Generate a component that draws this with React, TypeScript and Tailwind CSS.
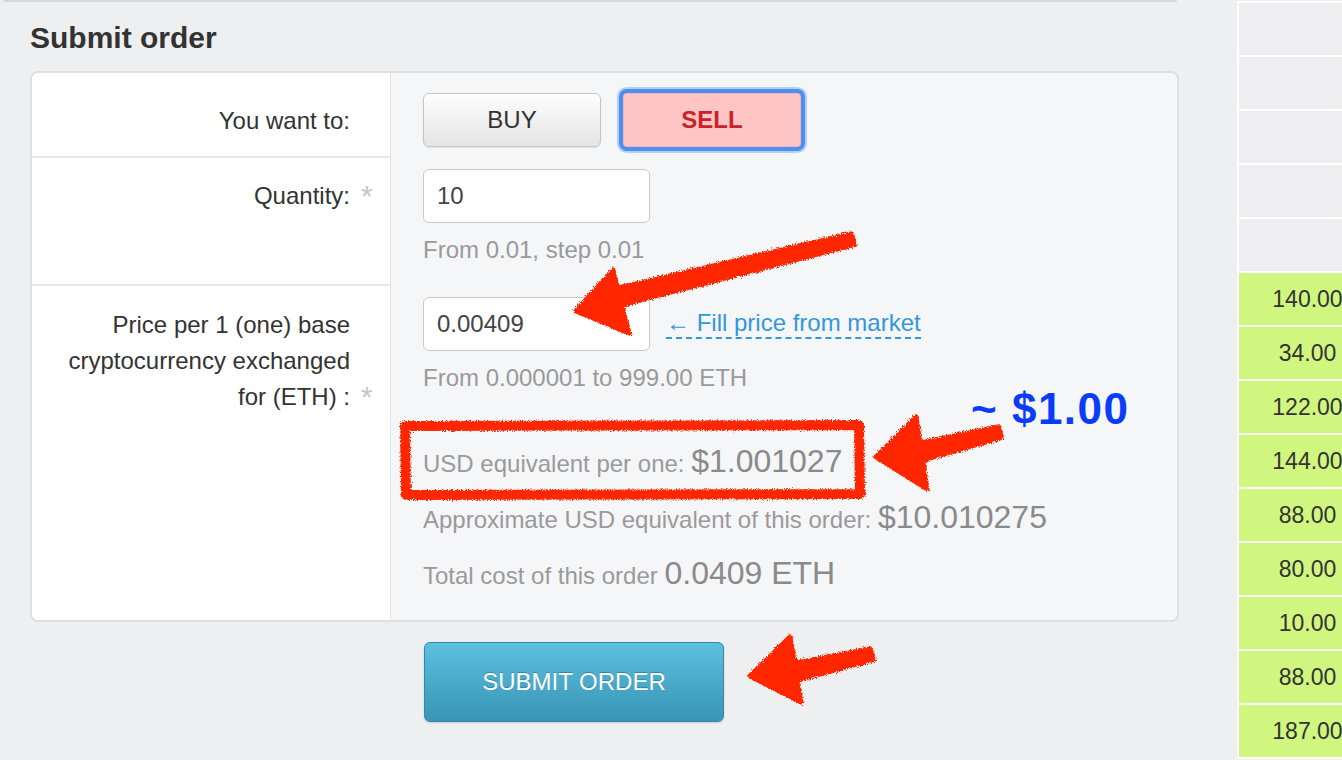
import type { ReactNode } from "react"

const depth = ["", "", "", "", "", "140.00", "34.00", "122.00", "144.00", "88.00", "80.00", "10.00", "88.00", "187.00"]

function Label({ children, required, top }: { children: ReactNode; required?: boolean; top: string }) {
  return (
    <div className={`flex items-end justify-end ${top}`}>
      <div className="text-right text-[24px] leading-[36px] text-[#333]">{children}</div>
      <span className="w-[40px] pb-[3px] pl-[11px] text-[30px] leading-none text-[#c6c6c6]">{required ? "*" : ""}</span>
    </div>
  )
}

function Annotations() {
  return (
    <svg className="pointer-events-none absolute inset-0" width="1342" height="760" viewBox="0 0 1342 760">
      <defs>
        <filter id="rough" x="-5%" y="-5%" width="110%" height="110%">
          <feTurbulence type="fractalNoise" baseFrequency="0.8" numOctaves="2" result="noise" />
          <feDisplacementMap in="SourceGraphic" in2="noise" scale="5" />
        </filter>
      </defs>
      <g fill="#ff2600" stroke="#ff2600" strokeLinejoin="round" filter="url(#rough)">
        {/* arrow to price input */}
        <polygon points="851.8,233.2 855.2,244.9 619.7,305.8 615.3,288.2" strokeWidth="4" />
        <polygon points="576,311 613,270 629,333" strokeWidth="5" />
        {/* arrow to usd box */}
        <polygon points="998.8,426.2 1002.2,437.8 921.7,460.8 917.3,443.2" strokeWidth="4" />
        <polygon points="876,457 916,417 927,489" strokeWidth="5" />
        {/* arrow to submit */}
        <polygon points="870.8,648.1 874.2,659.9 796.6,680.8 792.4,663.2" strokeWidth="4" />
        <polygon points="750,676 790,637 801,702" strokeWidth="5" />
        <path d="M405 426 L859 425 L860 494 L406 495 Z" fill="none" strokeWidth="10" />
      </g>
    </svg>
  )
}

export default function App() {
  return (
    <div className="relative h-[760px] w-[1342px] overflow-hidden bg-[#eeeff1] font-['Liberation_Sans',Arial,sans-serif] text-[#333]">
      <div className="flex items-start">
        <div className="w-[1237px] shrink-0">
          <div className="ml-[3px] h-[2px] w-[1174px] rounded-b-[3px] bg-[#d6d7da]" />
          <h2 className="ml-[30px] mt-[18px] text-[30px] font-bold leading-[36px] text-[#333]">Submit order</h2>

          <div className="ml-[30px] mt-[15px] w-[1149px] overflow-hidden rounded-[8px] border-2 border-[#dedfe2]">
            {/* row: direction */}
            <div className="flex">
              <div className="h-[85px] w-[358px] border-b-2 border-[#e6e7ea] bg-white">
                <Label top="pt-[30px]">You want to:</Label>
              </div>
              <div className="flex flex-1 gap-[22px] border-l border-[#e3e4e7] bg-[#f5f6f8] pl-[32px] pt-[20px]">
                <button className="h-[54px] w-[178px] rounded-[6px] border border-[#c4c4c4] bg-gradient-to-b from-[#fdfdfd] to-[#e5e5e5] text-[24px] text-[#333] shadow-[0_1px_1px_rgba(0,0,0,0.08)]">
                  BUY
                </button>
                <button className="h-[54px] w-[178px] rounded-[4px] border border-dotted border-[#eaa3a3] bg-[#ffc4c4] text-[24px] font-bold text-[#c8222a] shadow-[0_0_0_4px_#4b8ff0,0_0_0_6px_#b5d0f8]">
                  SELL
                </button>
              </div>
            </div>

            {/* row: quantity */}
            <div className="flex">
              <div className="h-[128px] w-[358px] border-b-2 border-[#e6e7ea] bg-white">
                <Label top="pt-[20px]" required>
                  Quantity:
                </Label>
              </div>
              <div className="flex-1 border-l border-[#e3e4e7] bg-[#f5f6f8] pl-[32px] pt-[11px]">
                <input
                  readOnly
                  value="10"
                  className="h-[54px] w-[227px] rounded-[6px] border border-[#c8c8c8] bg-white pl-[13px] text-[24px] text-[#444] outline-none"
                />
                <div className="mt-[9px] text-[24px] leading-[36px] text-[#9a9a9a]">From 0.01, step 0.01</div>
              </div>
            </div>

            {/* row: price */}
            <div className="flex">
              <div className="h-[334px] w-[358px] bg-white">
                <Label top="pt-[21px]" required>
                  Price per 1 (one) base
                  <br />
                  cryptocurrency exchanged
                  <br />
                  for (ETH) :
                </Label>
              </div>
              <div className="flex-1 border-l border-[#e3e4e7] bg-[#f5f6f8] pl-[32px] pt-[11px]">
                <div className="flex items-center gap-[16px]">
                  <input
                    readOnly
                    value="0.00409"
                    className="h-[54px] w-[227px] rounded-[6px] border border-[#c8c8c8] bg-white pl-[13px] text-[24px] text-[#444] outline-none"
                  />
                  <a className="border-b-2 border-dashed border-[#3497db] text-[24px] leading-[28px] text-[#3497db]">
                    ← Fill price from market
                  </a>
                </div>
                <div className="mt-[9px] text-[24px] leading-[36px] text-[#9a9a9a]">From 0.000001 to 999.00 ETH</div>
                <div className="mt-[40px] text-[24px] leading-[56px] text-[#9a9a9a]">
                  USD equivalent per one: <span className="text-[32px] leading-none text-[#8a8a8a]">$1.001027</span>
                </div>
                <div className="text-[24px] leading-[56px] text-[#9a9a9a]">
                  Approximate USD equivalent of this order:{" "}
                  <span className="text-[32px] leading-none text-[#8a8a8a]">$10.010275</span>
                </div>
                <div className="text-[24px] leading-[56px] text-[#9a9a9a]">
                  Total cost of this order <span className="text-[32px] leading-none text-[#8a8a8a]">0.0409 ETH</span>
                </div>
              </div>
            </div>
          </div>

          <button className="ml-[424px] mt-[20px] h-[80px] w-[300px] rounded-[6px] border border-[#3089a7] bg-gradient-to-b from-[#5cc0e1] to-[#3895b4] text-[24px] text-white [text-shadow:0_-1px_0_rgba(0,0,0,0.25)] shadow-[0_1px_2px_rgba(0,0,0,0.15)]">
            SUBMIT ORDER
          </button>
        </div>

        <aside className="mt-[1px] flex w-[139px] shrink-0 flex-col gap-[2px] bg-white pb-[2px] pl-[2px] pt-[2px]">
          {depth.map((v, i) => (
            <div
              key={i}
              className={`flex h-[52px] w-[137px] items-center justify-center text-[23px] text-[#333] ${v ? "bg-[#d0f67f]" : "bg-[#eeeef0]"}`}
            >
              {v}
            </div>
          ))}
        </aside>
      </div>

      <Annotations />

      <div className="absolute left-[971px] top-[387px] text-[44px] font-bold leading-none tracking-[1.5px] text-[#0b3df8]">
        ~ $1.00
      </div>
    </div>
  )
}
